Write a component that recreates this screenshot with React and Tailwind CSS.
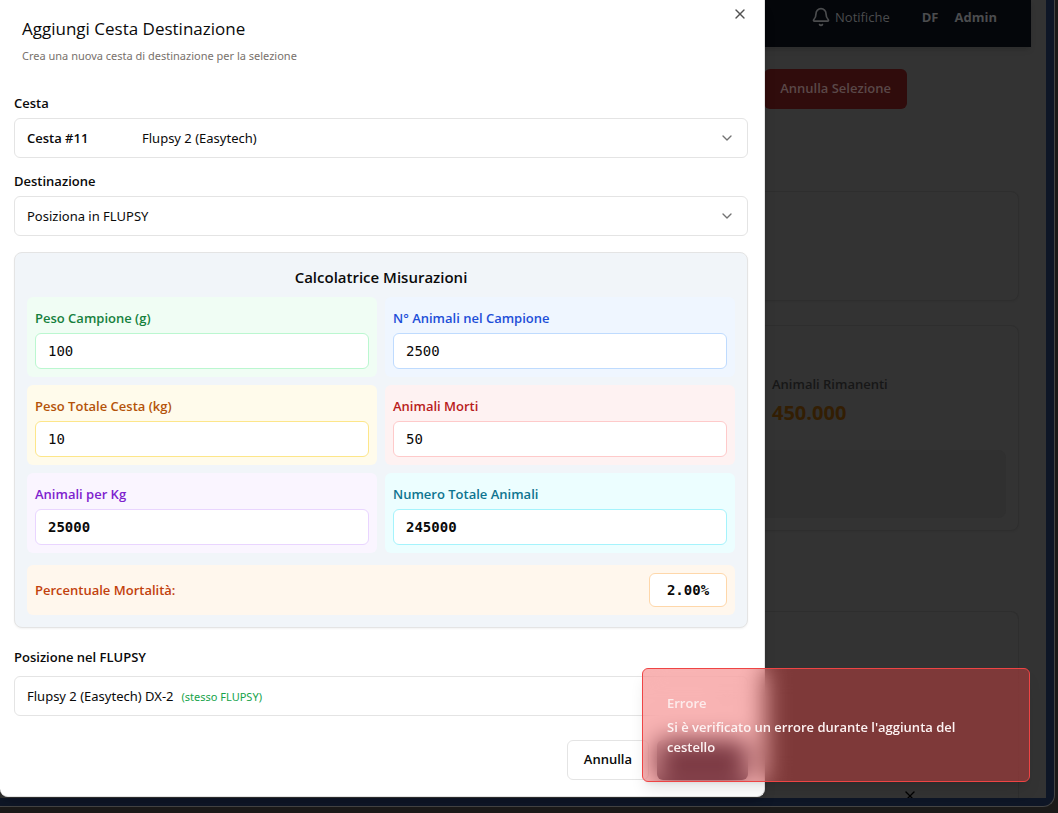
import React from "react";
import { Bell, ChevronDown, X } from "lucide-react";

function Field({ id, label, value, tone, box, text, strong }) {
  return (
    <div className={"rounded-md p-2 " + tone}>
      <label htmlFor={id} className={"block pt-[3px] text-[13px] leading-5 font-semibold " + text}>
        {label}
      </label>
      <input
        id={id}
        defaultValue={value}
        className={
          "mt-[5px] block h-9 w-full rounded-md border bg-white px-3 font-['DejaVu_Sans_Mono',monospace] text-[14px] text-neutral-950 " +
          box +
          (strong ? " font-bold" : "")
        }
      />
    </div>
  );
}

const fields = [
  { id: "peso", label: "Peso Campione (g)", value: "100", tone: "bg-[#f0fdf4]", box: "border-[#bbf7d0]", text: "text-[#15803d]" },
  { id: "campione", label: "N° Animali nel Campione", value: "2500", tone: "bg-[#eff6ff]", box: "border-[#bfdbfe]", text: "text-[#1d4ed8]" },
  { id: "totale", label: "Peso Totale Cesta (kg)", value: "10", tone: "bg-[#fffbeb]", box: "border-[#fde68a]", text: "text-[#b45309]" },
  { id: "morti", label: "Animali Morti", value: "50", tone: "bg-[#fef2f2]", box: "border-[#fecaca]", text: "text-[#b91c1c]" },
  { id: "perkg", label: "Animali per Kg", value: "25000", tone: "bg-[#faf5ff]", box: "border-[#e9d5ff]", text: "text-[#7e22ce]", strong: true },
  { id: "numero", label: "Numero Totale Animali", value: "245000", tone: "bg-[#ecfeff]", box: "border-[#a5f3fc]", text: "text-[#0e7490]", strong: true },
];

function SelectBox({ id, children }) {
  return (
    <button
      id={id}
      type="button"
      role="combobox"
      aria-expanded="false"
      className="flex h-10 w-full items-center justify-between rounded-md border border-[#e4e4e4] bg-white px-3 text-left font-['Noto_Sans',sans-serif] text-[13px] leading-5"
    >
      <span className="flex items-baseline">{children}</span>
      <ChevronDown className="size-4 text-neutral-500" strokeWidth={2} />
    </button>
  );
}

function Page() {
  return (
    <div className="flex h-screen flex-col overflow-hidden bg-[#1b1a19] pr-[3px] pb-1.5">
      <div className="flex min-h-0 grow flex-col rounded-br-xl border-r border-b border-[#444444] bg-[#0e1626] pr-2 pb-2">
        <div className="flex min-h-0 grow flex-col overflow-hidden bg-[#333333] pr-[15px]">
          <header className="flex h-[47px] shrink-0 items-start justify-end bg-[#04060a] pt-[7px] pr-[34px] text-[13px] leading-5 text-[#4b4c4e] shadow-md">
            <button type="button" className="flex items-center gap-1">
              <Bell className="size-5" strokeWidth={2} />
              Notifiche
            </button>
            <span className="ml-8 font-bold">DF</span>
            <span className="ml-4 font-bold">Admin</span>
          </header>
          <main className="flex min-h-0 grow flex-col pr-3">
            <div className="flex justify-end pt-[22px] pr-28">
              <button type="button" className="h-10 rounded-md bg-[#300c0c] px-4 text-[13px] font-semibold text-[#5a4848]">
                Annulla Selezione
              </button>
            </div>
            <section className="mt-[82px] h-[110px] shrink-0 rounded-lg border border-[#2e2e2e] shadow-xs" />
            <section className="mt-6 flex h-[206px] shrink-0 flex-col rounded-lg border border-[#2e2e2e] px-3 pt-12 pb-3 shadow-xs">
              <div className="ml-auto w-[234px]">
                <h3 className="text-[13px] leading-5 font-semibold text-[#171717]">Animali Rimanenti</h3>
                <p className="mt-1 text-[20px] leading-[30px] font-bold text-[#331e03]">450.000</p>
              </div>
              <div className="mt-auto h-[68px] rounded-lg bg-[#303030]" />
            </section>
            <section className="mt-20 flex min-h-0 grow items-end justify-end rounded-t-lg border border-b-0 border-[#2e2e2e] pr-[100px]">
              <X className="-mb-1.5 size-4 text-black" strokeWidth={2} />
            </section>
          </main>
        </div>
      </div>
    </div>
  );
}

export default function App() {
  return (
    <div className="relative h-screen overflow-hidden font-['Open_Sans',sans-serif] text-neutral-950">
      <Page />
      <div
        role="dialog"
        aria-labelledby="titolo"
        className="absolute top-0 left-0 w-[765px] rounded-b-lg border-r border-b border-[#e4e4e4] bg-white pr-4 pb-4 pl-3.5 shadow-lg"
      >
        <button type="button" aria-label="Chiudi" className="absolute top-1.5 right-4 text-neutral-600">
          <X className="size-4" strokeWidth={2} />
        </button>
        <header className="px-2 pt-4">
          <h2 id="titolo" className="text-[17px] leading-[26px] font-medium">
            Aggiungi Cesta Destinazione
          </h2>
          <p className="mt-1 font-['Noto_Sans',sans-serif] text-[11px] leading-5 text-[#78716c]">
            Crea una nuova cesta di destinazione per la selezione
          </p>
        </header>
        <form>
          <label htmlFor="cesta" className="mt-[27px] mb-[5px] block text-[13px] leading-5 font-semibold">
            Cesta
          </label>
          <SelectBox id="cesta">
            <span className="w-[115px] font-['Open_Sans',sans-serif] font-semibold">Cesta #11</span>
            <span>Flupsy 2 (Easytech)</span>
          </SelectBox>
          <label htmlFor="destinazione" className="mt-[13px] mb-[5px] block text-[13px] leading-5 font-semibold">
            Destinazione
          </label>
          <SelectBox id="destinazione">Posiziona in FLUPSY</SelectBox>

          <section className="mt-4 rounded-lg border border-[#e4e4e4] bg-[#f1f5f9] p-3 shadow-xs">
            <h3 className="mb-2 text-center text-[15px] leading-6 font-semibold">Calcolatrice Misurazioni</h3>
            <div className="grid grid-cols-2 gap-2">
              {fields.map((f) => (
                <Field key={f.id} {...f} />
              ))}
            </div>
            <div className="mt-3 flex items-center justify-between rounded-md bg-[#fff7ed] p-2">
              <span className="text-[13px] leading-5 font-semibold text-[#c2410c]">Percentuale Mortalità:</span>
              <output className="w-[78px] rounded-md border border-[#fed7aa] bg-white py-1 text-center font-['DejaVu_Sans_Mono',monospace] text-[14px] leading-6 font-bold">
                2.00%
              </output>
            </div>
          </section>

          <label htmlFor="posizione" className="mt-[19px] mb-[9px] block text-[13px] leading-5 font-semibold">
            Posizione nel FLUPSY
          </label>
          <SelectBox id="posizione">
            Flupsy 2 (Easytech) DX-2
            <span className="ml-2 text-[11px] text-[#16a34a]">(stesso FLUPSY)</span>
          </SelectBox>
          <div className="mt-6 flex justify-end gap-2">
            <button type="button" className="h-10 rounded-md border border-[#e4e4e4] bg-white px-4 text-[13px] font-semibold">
              Annulla
            </button>
            <button type="button" aria-label="Aggiungi" className="h-10 w-[91px] rounded-md bg-[#2b3040]" />
          </div>
        </form>
      </div>
      <div
        role="alert"
        className="absolute right-7 bottom-[31px] w-[388px] rounded-md border border-[#ef4444] bg-[#ef4444]/40 p-6 text-[13px] leading-5 font-semibold text-[#fdf2f2] shadow-lg backdrop-blur-md"
      >
        <p className="opacity-90">Errore</p>
        <p className="mt-1">Si è verificato un errore durante l'aggiunta del cestello</p>
      </div>
    </div>
  );
}
